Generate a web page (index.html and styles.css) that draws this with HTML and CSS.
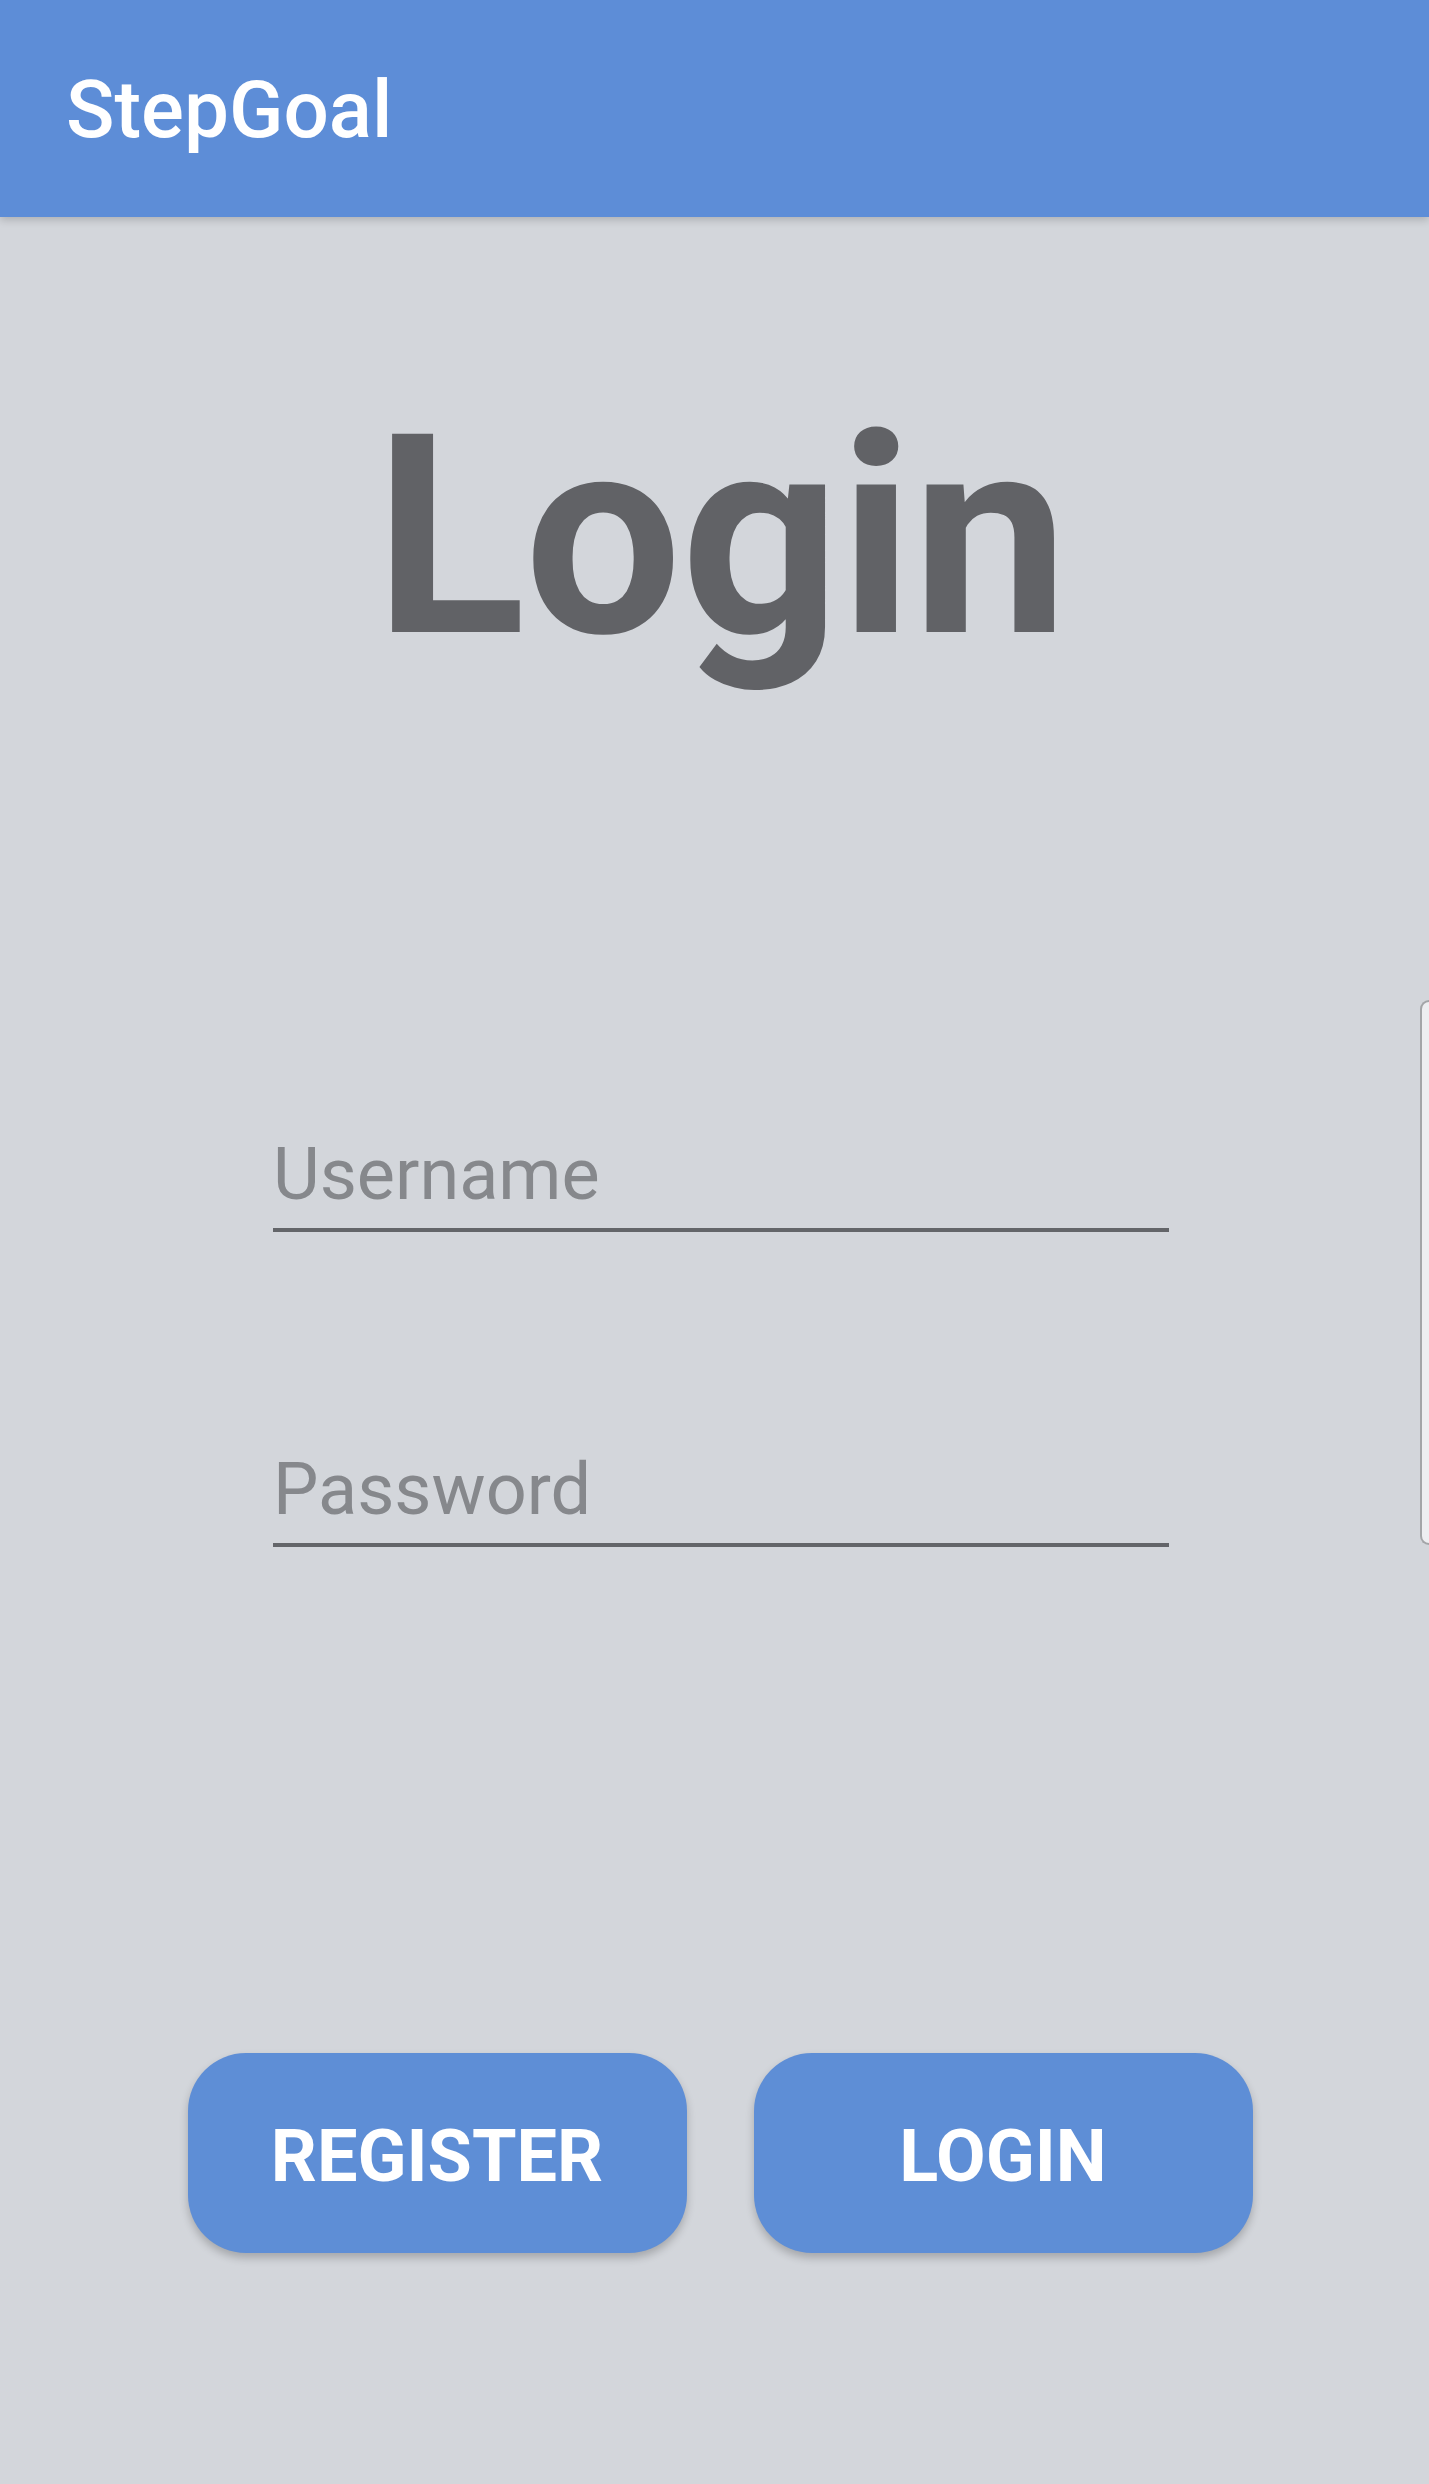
FILE: index.html
```html
<!DOCTYPE html>
<html lang="en">
<head>
<meta charset="utf-8">
<title>StepGoal</title>
<link rel="stylesheet" href="styles.css">
</head>
<body>
<header class="appbar">
  <span class="appbar-title">StepGoal</span>
</header>
<main class="content">
  <h1 class="title">Login</h1>
  <div class="form">
    <div class="field"><span class="field-hint">Username</span></div>
    <div class="field field-second"><span class="field-hint">Password</span></div>
  </div>
  <div class="actions">
    <button class="btn" type="button">REGISTER</button>
    <button class="btn" type="button">LOGIN</button>
  </div>
</main>
<div class="edge-handle"></div>
</body>
</html>
```

FILE: styles.css
```css
* { box-sizing: border-box; }

html, body {
  margin: 0;
  padding: 0;
}

body {
  width: 1429px;
  min-height: 2484px;
  background: #d3d6db;
  font-family: Roboto, "Noto Sans", "Liberation Sans", sans-serif;
  position: relative;
  overflow: hidden;
}

.appbar {
  height: 217px;
  background: #5d8dd7;
  display: flex;
  align-items: center;
  padding-left: 66px;
  box-shadow: 0 3px 8px rgba(0, 0, 0, 0.18);
  position: relative;
  z-index: 1;
}

.appbar-title {
  color: #ffffff;
  font-size: 80px;
  font-weight: 500;
  line-height: 1;
  padding-top: 2px;
}

.content {
  padding-left: 11px;
  display: flex;
  flex-direction: column;
  align-items: center;
}

.title {
  margin: 180px 0 0 0;
  font-size: 279px;
  font-weight: 700;
  line-height: 279px;
  color: #616266;
  letter-spacing: -1px;
  padding-left: 2px;
}

.form {
  margin-top: 457px;
  display: flex;
  flex-direction: column;
  width: 896px;
  margin-left: 2px;
}

.field {
  border-bottom: 4px solid #636569;
  padding-bottom: 11px;
}

.field-second {
  margin-top: 216px;
}

.field-hint {
  display: block;
  font-size: 72px;
  line-height: 84px;
  height: 84px;
  font-weight: 400;
  color: #86888c;
}

.actions {
  margin-top: 506px;
  display: flex;
  gap: 67px;
}

.btn {
  width: 499px;
  height: 200px;
  border: none;
  border-radius: 58px;
  background: #5e8ed6;
  color: #ffffff;
  font-family: Roboto, "Noto Sans", "Liberation Sans", sans-serif;
  font-size: 72px;
  font-weight: 700;
  letter-spacing: 0;
  padding: 6px 0 0 0;
  box-shadow: 0 5px 9px rgba(0, 0, 0, 0.22);
}

.edge-handle {
  position: absolute;
  top: 1000px;
  right: 0;
  width: 9px;
  height: 545px;
  background: #edeef1;
  border: 2px solid #a3a5a8;
  border-right: none;
  border-radius: 12px 0 0 12px;
}
```
